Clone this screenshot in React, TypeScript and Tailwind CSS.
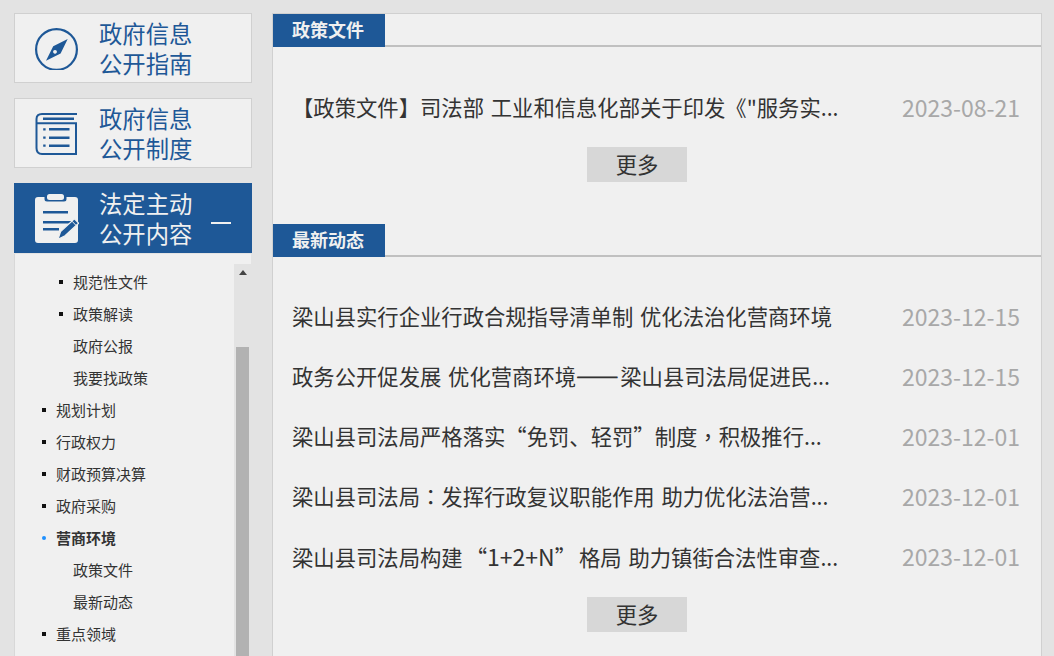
const FONT = "font-['Noto_Sans_CJK_SC','Noto_Sans',sans-serif]";

function CompassIcon() {
  return (
    <svg width="44" height="44" viewBox="0 0 44 44" fill="none" className="shrink-0">
      <circle cx="21.5" cy="23.5" r="20.4" stroke="#1e5897" strokeWidth="2.2" />
      <path
        fillRule="evenodd"
        d="M32.7 13 L25.6 27.4 L11 34.7 L18.2 20.2 Z M20 23.9 a1.9 1.9 0 1 0 0.01 0 Z"
        fill="#1e5897"
      />
    </svg>
  );
}

function ListIcon() {
  return (
    <svg width="44" height="44" viewBox="0 0 44 44" fill="none" className="shrink-0">
      <path
        d="M42 3 H7 Q1.5 3 1.5 8 V37 Q1.5 43 7 43 H41 V12.3 H2"
        stroke="#1e5897"
        strokeWidth="2"
      />
      <path d="M8 7.8 H39 M14 18.3 H34.5 M14 26.7 H34.5 M14 34.7 H34.5" stroke="#1e5897" strokeWidth="2.4" />
      <path d="M8.2 18.3 H10.6 M8.2 26.7 H10.6 M8.2 34.7 H10.6" stroke="#1e5897" strokeWidth="2.2" />
    </svg>
  );
}

function ClipboardIcon() {
  return (
    <svg width="44" height="50" viewBox="0 0 44 50" className="shrink-0">
      <path
        d="M3 4 H9.5 V6 Q9.5 8.5 12 8.5 H29 Q31.5 8.5 31.5 6 V4 H40 Q43 4 43 7 V47 Q43 50 40 50 H3 Q0 50 0 47 V7 Q0 4 3 4 Z"
        fill="#f0f0f0"
      />
      <rect x="12" y="1" width="17" height="6" rx="2.5" fill="#f0f0f0" />
      <path d="M8 19.3 H33 M8 29.3 H36 M8 36.3 H24" stroke="#1e5897" strokeWidth="2.6" />
      <path d="M23 46.3 L25.6 38.6 L39.4 25.8 L43.6 30.2 L30 42.8 Z" fill="#1e5897" stroke="#f0f0f0" strokeWidth="1.2" />
      <path d="M37 28.2 L41 32.4" stroke="#f0f0f0" strokeWidth="1" />
    </svg>
  );
}

function MenuCard({
  lines,
  icon,
  active,
}: {
  lines: [string, string];
  icon: React.ReactNode;
  active?: boolean;
}) {
  return (
    <div
      className={`flex h-[70px] items-center border pl-[20px] ${
        active ? "border-[#1e5897] bg-[#1e5897] text-[#f0f0f0]" : "border-[#d0d0d0] bg-[#f0f0f0] text-[#1e5897]"
      }`}
    >
      <div className="flex w-[64px] shrink-0 items-center">{icon}</div>
      <div className="mb-[1px] text-[23.33px] leading-[30px]">
        <div>{lines[0]}</div>
        <div>{lines[1]}</div>
      </div>
      {active && <div className="ml-[19px] mt-[9px] h-[2px] w-[20px] bg-[#f0f0f0]" />}
    </div>
  );
}

type Item = { text: string; level: 1 | 2; bullet?: boolean; active?: boolean };

const items: Item[] = [
  { text: "规范性文件", level: 2, bullet: true },
  { text: "政策解读", level: 2, bullet: true },
  { text: "政府公报", level: 2 },
  { text: "我要找政策", level: 2 },
  { text: "规划计划", level: 1, bullet: true },
  { text: "行政权力", level: 1, bullet: true },
  { text: "财政预算决算", level: 1, bullet: true },
  { text: "政府采购", level: 1, bullet: true },
  { text: "营商环境", level: 1, bullet: true, active: true },
  { text: "政策文件", level: 2 },
  { text: "最新动态", level: 2 },
  { text: "重点领域", level: 1, bullet: true },
];

function SideItem({ item }: { item: Item }) {
  return (
    <div
      className={`flex h-[32px] items-center text-[15px] text-[#333] ${
        item.level === 1 ? "pl-[27px]" : "pl-[44px]"
      } ${item.active ? "font-bold" : ""}`}
    >
      <span
        className={`mr-[10px] h-[4px] w-[4px] shrink-0 ${
          item.bullet ? (item.active ? "rounded-full bg-[#1e90ff]" : "bg-[#111]") : "bg-transparent"
        }`}
      />
      {item.text}
    </div>
  );
}

function SubMenu() {
  return (
    <div className="mr-[1px] flex h-[402px] overflow-hidden border-l border-[#d8d8d8] bg-[#f0f0f0]">
      <div className="min-w-0 flex-1 pt-[12px]">
        {items.map((item) => (
          <SideItem key={item.text} item={item} />
        ))}
      </div>
      <div className="mt-[10px] flex w-[17px] shrink-0 flex-col items-center bg-[#e3e3e3]">
        <div className="flex h-[83px] w-full justify-center pt-[6px]">
          <svg width="8" height="5" viewBox="0 0 8 5">
            <path d="M4 0 L8 5 H0 Z" fill="#444" />
          </svg>
        </div>
        <div className="w-[13px] flex-1 bg-[#b2b2b2]" />
      </div>
    </div>
  );
}

function SectionHeader({ title }: { title: string }) {
  return (
    <div className="flex h-[33px] items-stretch border-b-2 border-[#c0c0c0]">
      <div className="mb-[-2px] flex w-[112px] items-center bg-[#1e5897] pb-[2px] pl-[19px] text-[18px] font-bold text-[#f0f0f0]">
        {title}
      </div>
    </div>
  );
}

function Fw({ children, className = "" }: { children: React.ReactNode; className?: string }) {
  return <span className={`[font-feature-settings:'fwid'] ${className}`}>{children}</span>;
}

function Tc({ children }: { children: React.ReactNode }) {
  return <span className="font-['Noto_Sans_CJK_TC',sans-serif]">{children}</span>;
}

function Row({ title, date }: { title: React.ReactNode; date: string }) {
  return (
    <div className="flex h-[60px] items-center justify-between pl-[19px] pr-[21px] text-[21.33px]">
      <span className="mb-[2px] whitespace-nowrap text-[#333] [word-spacing:2px]">{title}</span>
      <span className="mb-[2px] whitespace-nowrap text-[23px] text-[#a8a8a8]">{date}</span>
    </div>
  );
}

function MoreButton() {
  return (
    <div className="flex justify-center pr-[40px]">
      <div className="flex h-[35px] w-[100px] items-center justify-center bg-[#d7d7d7] pb-[1px] text-[21.33px] text-[#333]">
        更多
      </div>
    </div>
  );
}

export default function App() {
  return (
    <div className={`flex h-[656px] w-full gap-[20px] overflow-hidden bg-[#e3e3e3] pl-[14px] pt-[13px] ${FONT}`}>
      <div className="flex w-[238px] shrink-0 flex-col">
        <MenuCard lines={["政府信息", "公开指南"]} icon={<CompassIcon />} />
        <div className="h-[15px]" />
        <MenuCard lines={["政府信息", "公开制度"]} icon={<ListIcon />} />
        <div className="h-[15px]" />
        <MenuCard lines={["法定主动", "公开内容"]} icon={<ClipboardIcon />} active />
        <div className="h-[1px]" />
        <SubMenu />
      </div>
      <div className="h-[700px] w-[770px] shrink-0 border border-[#d0d0d0] bg-[#f0f0f0]">
        <SectionHeader title="政策文件" />
        <div className="mt-[31px]">
          <Row title="【政策文件】司法部 工业和信息化部关于印发《&quot;服务实..." date="2023-08-21" />
        </div>
        <div className="mt-[9px]">
          <MoreButton />
        </div>
        <div className="mt-[42px]">
          <SectionHeader title="最新动态" />
        </div>
        <div className="mt-[30px]">
          <Row title="梁山县实行企业行政合规指导清单制 优化法治化营商环境" date="2023-12-15" />
          <Row
            title={
              <>
                政务公开促发展 优化营商环境
                <Fw className="tracking-[1.5px] [-webkit-text-stroke:0.8px_#333]">——</Fw>
                梁山县司法局促进民...
              </>
            }
            date="2023-12-15"
          />
          <Row
            title={
              <>
                梁山县司法局严格落实<Fw>“</Fw>免罚、轻罚<Fw>”</Fw>制度<Tc>，</Tc>积极推行...
              </>
            }
            date="2023-12-01"
          />
          <Row
            title={
              <>
                梁山县司法局<Tc>：</Tc>发挥行政复议职能作用 助力优化法治营...
              </>
            }
            date="2023-12-01"
          />
          <Row
            title={
              <>
                梁山县司法局构建<Fw className="ml-[3px]">“</Fw>
                <span className="text-[23px]">1+2+N</span>
                <Fw className="mr-[3px]">”</Fw>格局 助力镇街合法性审查...
              </>
            }
            date="2023-12-01"
          />
        </div>
        <div className="mt-[10px]">
          <MoreButton />
        </div>
      </div>
    </div>
  );
}
